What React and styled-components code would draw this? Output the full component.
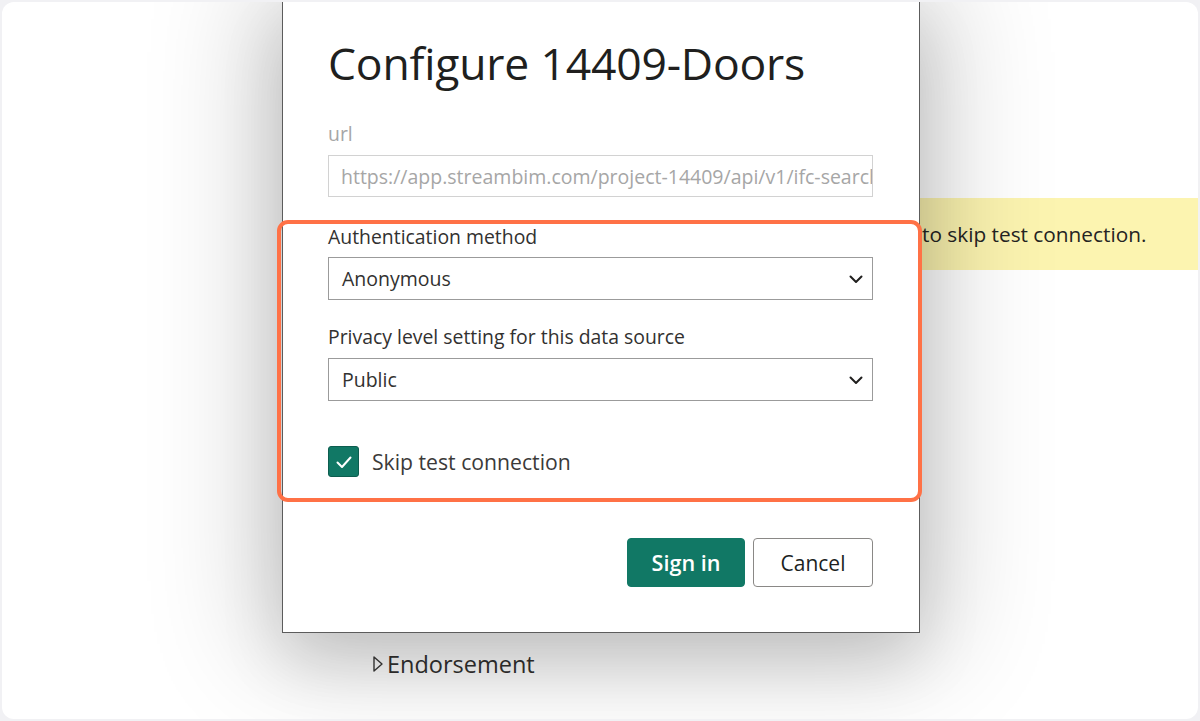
import React from "react";
import styled, { createGlobalStyle } from "styled-components";

const Global = createGlobalStyle`
  html, body { margin: 0; padding: 0; }
  body {
    background: #f1f1f4;
    font-family: "Open Sans", "Noto Sans", sans-serif;
    width: 1200px;
    height: 721px;
    overflow: hidden;
  }
  * { box-sizing: border-box; }
`;

const Frame = styled.div`
  position: relative;
  margin: 2px;
  width: 1196px;
  height: 717px;
  background: #ffffff;
  border-radius: 12px;
  overflow: hidden;
`;

const BgPage = styled.div`
  display: flex;
  flex-direction: column;
  padding-top: 196px;
`;

const Banner = styled.div`
  margin-left: 560px;
  height: 72px;
  display: flex;
  align-items: center;
  padding-left: 360px;
  background: #fcf4b0;
  color: #252423;
  font-size: 20.8px;
  white-space: nowrap;
`;

const Endorse = styled.div`
  margin-top: 379px;
  margin-left: 370px;
  display: flex;
  align-items: center;
  gap: 3px;
  color: #323130;
  font-size: 23.5px;
  line-height: 30px;
`;

const Dialog = styled.div`
  position: absolute;
  left: 280px;
  top: -2px;
  width: 638px;
  height: 633px;
  background: #ffffff;
  border: 1.5px solid #5c5c5c;
  border-top: none;
  box-shadow: 0 0 110px 20px rgba(0, 0, 0, 0.2), 0 30px 60px rgba(0, 0, 0, 0.12);
  padding: 36px 46px 0 45px;
  display: flex;
  flex-direction: column;
`;

const Title = styled.h1`
  margin: 0;
  font-weight: 400;
  font-size: 44.5px;
  line-height: 54px;
  color: #201f1e;
  letter-spacing: -0.2px;
`;

const Label = styled.div`
  font-size: 19.4px;
  line-height: 24px;
  color: ${(p) => (p.muted ? "#a6a6a6" : "#323130")};
  margin-top: ${(p) => p.top}px;
`;

const TextBox = styled.div`
  margin-top: 9px;
  height: 42px;
  border: 1px solid #d2d2d2;
  display: flex;
  align-items: center;
  padding-left: 12px;
  color: #a6a6a6;
  font-size: 19.5px;
  white-space: nowrap;
  overflow: hidden;
`;

const Select = styled.div`
  margin-top: ${(p) => p.top}px;
  height: 43px;
  border: 1.5px solid #9b9b9b;
  display: flex;
  align-items: center;
  justify-content: space-between;
  padding: 0 8px 0 13px;
  color: #323130;
  font-size: 19.5px;
`;

const CheckRow = styled.label`
  margin-top: 45px;
  display: flex;
  align-items: center;
  gap: 13px;
  font-size: 21.2px;
  color: #3b3a39;
`;

const Box = styled.span`
  width: 31px;
  height: 31px;
  border-radius: 3px;
  background: #117865;
  border: 1px solid #0d5d4f;
  display: flex;
  align-items: center;
  justify-content: center;
`;

const Actions = styled.div`
  margin-top: 61px;
  display: flex;
  justify-content: flex-end;
  gap: 8px;
`;

const Button = styled.button`
  height: 49px;
  width: ${(p) => p.w}px;
  border-radius: 4px;
  font-family: inherit;
  font-size: ${(p) => (p.primary ? 21.6 : 21)}px;
  cursor: pointer;
  background: ${(p) => (p.primary ? "#117865" : "#ffffff")};
  color: ${(p) => (p.primary ? "#ffffff" : "#201f1e")};
  border: 1px solid ${(p) => (p.primary ? "#117865" : "#8a8886")};
  font-weight: ${(p) => (p.primary ? 600 : 400)};
`;

const Highlight = styled.div`
  position: absolute;
  left: 275px;
  top: 218px;
  width: 645px;
  height: 282px;
  border: 4px solid #ff7146;
  border-radius: 11px;
  pointer-events: none;
`;

const Chevron = () => (
  <svg width="16" height="16" viewBox="0 0 16 16" fill="none">
    <path d="M2.5 5.5 L8 11 L13.5 5.5" stroke="#201f1e" strokeWidth="2" strokeLinecap="round" strokeLinejoin="round" />
  </svg>
);

const Check = () => (
  <svg width="20" height="20" viewBox="0 0 20 20" fill="none">
    <path d="M3.5 10.5 L8 15 L16.5 5.5" stroke="#ffffff" strokeWidth="2" strokeLinecap="round" strokeLinejoin="round" />
  </svg>
);

const Caret = () => (
  <svg width="12" height="18" viewBox="0 0 12 18" fill="none">
    <path d="M2 2 L10 9 L2 16 Z" stroke="#3b3a39" strokeWidth="1.4" strokeLinejoin="round" />
  </svg>
);

export default function App() {
  return (
    <>
      <Global />
      <Frame>
        <BgPage>
          <Banner>to skip test connection.</Banner>
          <Endorse>
            <Caret />
            Endorsement
          </Endorse>
        </BgPage>
        <Dialog>
          <Title>Configure 14409-Doors</Title>
          <Label muted top={32}>url</Label>
          <TextBox>https://app.streambim.com/project-14409/api/v1/ifc-search</TextBox>
          <Label top={28}>Authentication method</Label>
          <Select top={8}>
            <span>Anonymous</span>
            <Chevron />
          </Select>
          <Label top={25}>Privacy level setting for this data source</Label>
          <Select top={9}>
            <span>Public</span>
            <Chevron />
          </Select>
          <CheckRow>
            <Box>
              <Check />
            </Box>
            Skip test connection
          </CheckRow>
          <Actions>
            <Button primary w={118}>Sign in</Button>
            <Button w={120}>Cancel</Button>
          </Actions>
        </Dialog>
        <Highlight />
      </Frame>
    </>
  );
}
